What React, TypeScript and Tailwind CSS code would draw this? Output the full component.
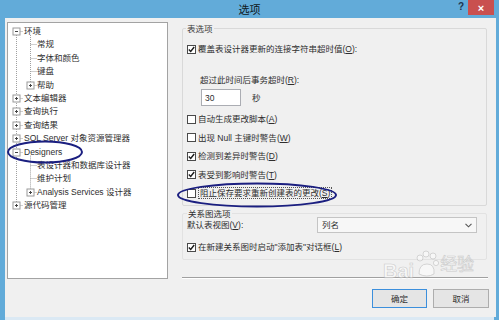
import type { ReactNode } from "react"

const tree = [
  { t: "环境", lvl: 0, box: "-" },
  { t: "常规", lvl: 1 },
  { t: "字体和颜色", lvl: 1 },
  { t: "键盘", lvl: 1 },
  { t: "帮助", lvl: 1, box: "+" },
  { t: "文本编辑器", lvl: 0, box: "+" },
  { t: "查询执行", lvl: 0, box: "+" },
  { t: "查询结果", lvl: 0, box: "+" },
  { t: "SQL Server 对象资源管理器", lvl: 0, box: "+" },
  { t: "Designers", lvl: 0, box: "-" },
  { t: "表设计器和数据库设计器", lvl: 1 },
  { t: "维护计划", lvl: 1 },
  { t: "Analysis Services 设计器", lvl: 1, box: "+" },
  { t: "源代码管理", lvl: 0, box: "+" },
]

const ROW = 13.4
const cy = (i: number) => 8 + ROW * i

function TreeLines() {
  const dot = { stroke: "#a0a0a0", strokeWidth: 1, strokeDasharray: "1 1" }
  return (
    <svg className="absolute left-0 top-0 pointer-events-none" width="160" height="200">
      {/* root level */}
      <line x1="8.5" y1={cy(0)} x2="8.5" y2={cy(13)} {...dot} />
      {/* children of 环境 and Designers */}
      <line x1="22.5" y1={cy(0) + 4} x2="22.5" y2={cy(4)} {...dot} />
      <line x1="22.5" y1={cy(9) + 4} x2="22.5" y2={cy(12)} {...dot} />
      {tree.map((r, i) => {
        const x = r.lvl === 0 ? 8.5 : 22.5
        const y = Math.round(cy(i)) + 0.5
        return (
          <g key={i}>
            <line x1={x} y1={y} x2={x + 6.5} y2={y} {...dot} />
            {r.box && (
              <g>
                <rect x={x - 3.5} y={y - 3.5} width="7" height="7" fill="white" stroke="#9a9a9a" />
                <line x1={x - 1.5} y1={y} x2={x + 1.5} y2={y} stroke="#444" />
                {r.box === "+" && <line x1={x} y1={y - 1.5} x2={x} y2={y + 1.5} stroke="#444" />}
              </g>
            )}
          </g>
        )
      })}
    </svg>
  )
}

function Check({ on }: { on?: boolean }) {
  return (
    <span className="w-[9px] h-[9px] border border-[#4a4a4a] bg-white flex items-center justify-center shrink-0">
      {on && (
        <svg width="7" height="7" viewBox="0 0 7 7">
          <path d="M0.8 3.6 L2.7 5.5 L6.2 1" stroke="#1a1a1a" strokeWidth="1.4" fill="none" />
        </svg>
      )}
    </span>
  )
}

function CheckRow({ on, children, className = "" }: { on?: boolean; children: ReactNode; className?: string }) {
  return (
    <div className={`flex items-center h-[12px] gap-[2px] ${className}`}>
      <Check on={on} />
      {children}
    </div>
  )
}

const Key = ({ k }: { k: string }) => (
  <>
    (<span className="underline">{k}</span>)
  </>
)

export default function App() {
  return (
    <div className="relative w-[499px] h-[320px] overflow-hidden bg-[#62abd9] text-[8.5px] leading-[12px] text-[#2e2e2e] font-['Liberation_Sans','Noto_Sans_CJK_SC',sans-serif]">
      {/* title bar */}
      <div className="h-[18px] grid grid-cols-[1fr_auto_1fr] items-center">
        <div />
        <div className="text-[11px] text-[#101820] pt-[1px]">选项</div>
        <div className="flex justify-end items-start h-full pr-[5px]">
          <span className="text-[10px] font-bold text-[#1c3550] mt-[1px] mr-[4px]">?</span>
          <span className="w-[26px] h-[15px] bg-[#c9504f] flex items-center justify-center text-white text-[11px] font-bold">
            ×
          </span>
        </div>
      </div>

      {/* client area */}
      <div className="ml-[5px] mr-[3px] h-[299px] bg-[#f0f0f0] flex">
        {/* tree */}
        <div className="ml-[2px] mt-[4px] w-[161px] h-[257px] border border-[#a3a3a3] bg-white relative pt-[1.3px]">
          <TreeLines />
          {tree.map((r, i) => (
            <div
              key={i}
              className={`h-[13.4px] flex items-center whitespace-nowrap relative ${r.lvl === 0 ? "pl-[16px]" : "pl-[29px]"}`}
            >
              {r.t}
            </div>
          ))}
        </div>

        {/* right column */}
        <div className="ml-[14px] w-[307px] flex flex-col">
          {/* group 1 */}
          <div className="mt-[10px] w-[305px] h-[178px] border border-[#d9d9d9] rounded-[2px] pl-[4px]">
            <div className="-mt-[6px] ml-[-1px] px-[1px] w-fit bg-[#f0f0f0] text-[#3a3a3a]">表选项</div>
            <CheckRow on className="mt-[8px]">
              <span>
                覆盖表设计器更新的连接字符串超时值<Key k="O" />:
              </span>
            </CheckRow>
            <div className="mt-[19px] ml-[13px]">
              超过此时间后事务超时<Key k="R" />:
            </div>
            <div className="mt-[3px] ml-[14px] flex items-center">
              <div className="w-[40px] h-[17px] bg-white border border-[#abadb3] pl-[3px] flex items-center">30</div>
              <span className="ml-[11px]">秒</span>
            </div>
            <CheckRow className="mt-[7px]">
              <span>
                自动生成更改脚本<Key k="A" />
              </span>
            </CheckRow>
            <CheckRow className="mt-[6.5px]">
              <span>
                出现 Null 主键时警告<Key k="W" />
              </span>
            </CheckRow>
            <CheckRow on className="mt-[6.5px]">
              <span>
                检测到差异时警告<Key k="D" />
              </span>
            </CheckRow>
            <CheckRow on className="mt-[6.5px]">
              <span>
                表受到影响时警告<Key k="T" />
              </span>
            </CheckRow>
            <CheckRow className="mt-[6.5px]">
              <span className="border border-dotted border-[#555] px-[1px] leading-[10px]">
                阻止保存要求重新创建表的更改<Key k="S" />
              </span>
            </CheckRow>
          </div>

          {/* group 2 */}
          <div className="mt-[7px] w-[305px] h-[47px] border border-[#e2e2e2] rounded-[2px] pl-[4px] pr-[9px]">
            <div className="-mt-[6px] px-[1px] w-fit bg-[#f0f0f0]">关系图选项</div>
            <div className="-mt-[3px] flex items-center justify-between h-[16px]">
              <span>
                默认表视图<Key k="V" />:
              </span>
              <div className="w-[160px] h-[16px] bg-[#f7f7f7] border border-[#c4c4c4] flex items-center pl-[4px] pr-[4px]">
                <span className="flex-1">列名</span>
                <svg width="7" height="5" viewBox="0 0 7 5">
                  <path d="M0.5 0.8 L3.5 3.8 L6.5 0.8" stroke="#555" strokeWidth="1.1" fill="none" />
                </svg>
              </div>
            </div>
            <CheckRow on className="mt-[8px]">
              <span>
                在新建关系图时启动"添加表"对话框<Key k="L" />
              </span>
            </CheckRow>
          </div>

          {/* separator */}
          <div className="mt-[17px] w-[306px] h-[2px] border-t border-[#a0a0a0] border-b border-b-white" />

          {/* buttons */}
          <div className="mt-[10px] flex justify-end gap-[6px]">
            <button className="w-[55px] h-[19px] bg-[#e5e5e5] border border-[#3c8fdc] text-[8.5px] text-[#2e2e2e]">确定</button>
            <button className="w-[56px] h-[19px] bg-[#e5e5e5] border border-[#adadad] text-[8.5px] text-[#2e2e2e]">取消</button>
          </div>
        </div>
      </div>
      <div className="mx-[5px] h-[3px] bg-[#dbe9f4]" />

      {/* annotations: hand-drawn ellipses */}
      <svg className="absolute left-0 top-0 pointer-events-none" width="499" height="320">
        <ellipse cx="45" cy="152" rx="37" ry="10.5" fill="none" stroke="#1b1f80" strokeWidth="2" />
        <ellipse cx="257" cy="195" rx="79" ry="11.5" fill="none" stroke="#1b1f80" strokeWidth="2" />
      </svg>

      {/* watermark */}
      <div className="absolute left-[383px] top-[250px] flex items-end pointer-events-none opacity-50">
        <span className="text-[20px] font-bold text-white [-webkit-text-stroke:0.6px_#a8a8a8] leading-[22px]">Bai</span>
        <svg width="26" height="30" viewBox="0 0 26 30" className="mb-[2px]">
          <g fill="white" stroke="#a8a8a8" strokeWidth="0.8">
            <circle cx="6" cy="8" r="3" />
            <circle cx="12" cy="4" r="3" />
            <circle cx="19" cy="6" r="3" />
            <circle cx="22" cy="13" r="2.6" />
            <path d="M5 24 Q5 14 13 14 Q21 14 20 24 Q13 28 5 24 Z" />
          </g>
        </svg>
        <span className="text-[17px] text-white [-webkit-text-stroke:0.6px_#a8a8a8] leading-[22px] mb-[6px]">经验</span>
      </div>
    </div>
  )
}
